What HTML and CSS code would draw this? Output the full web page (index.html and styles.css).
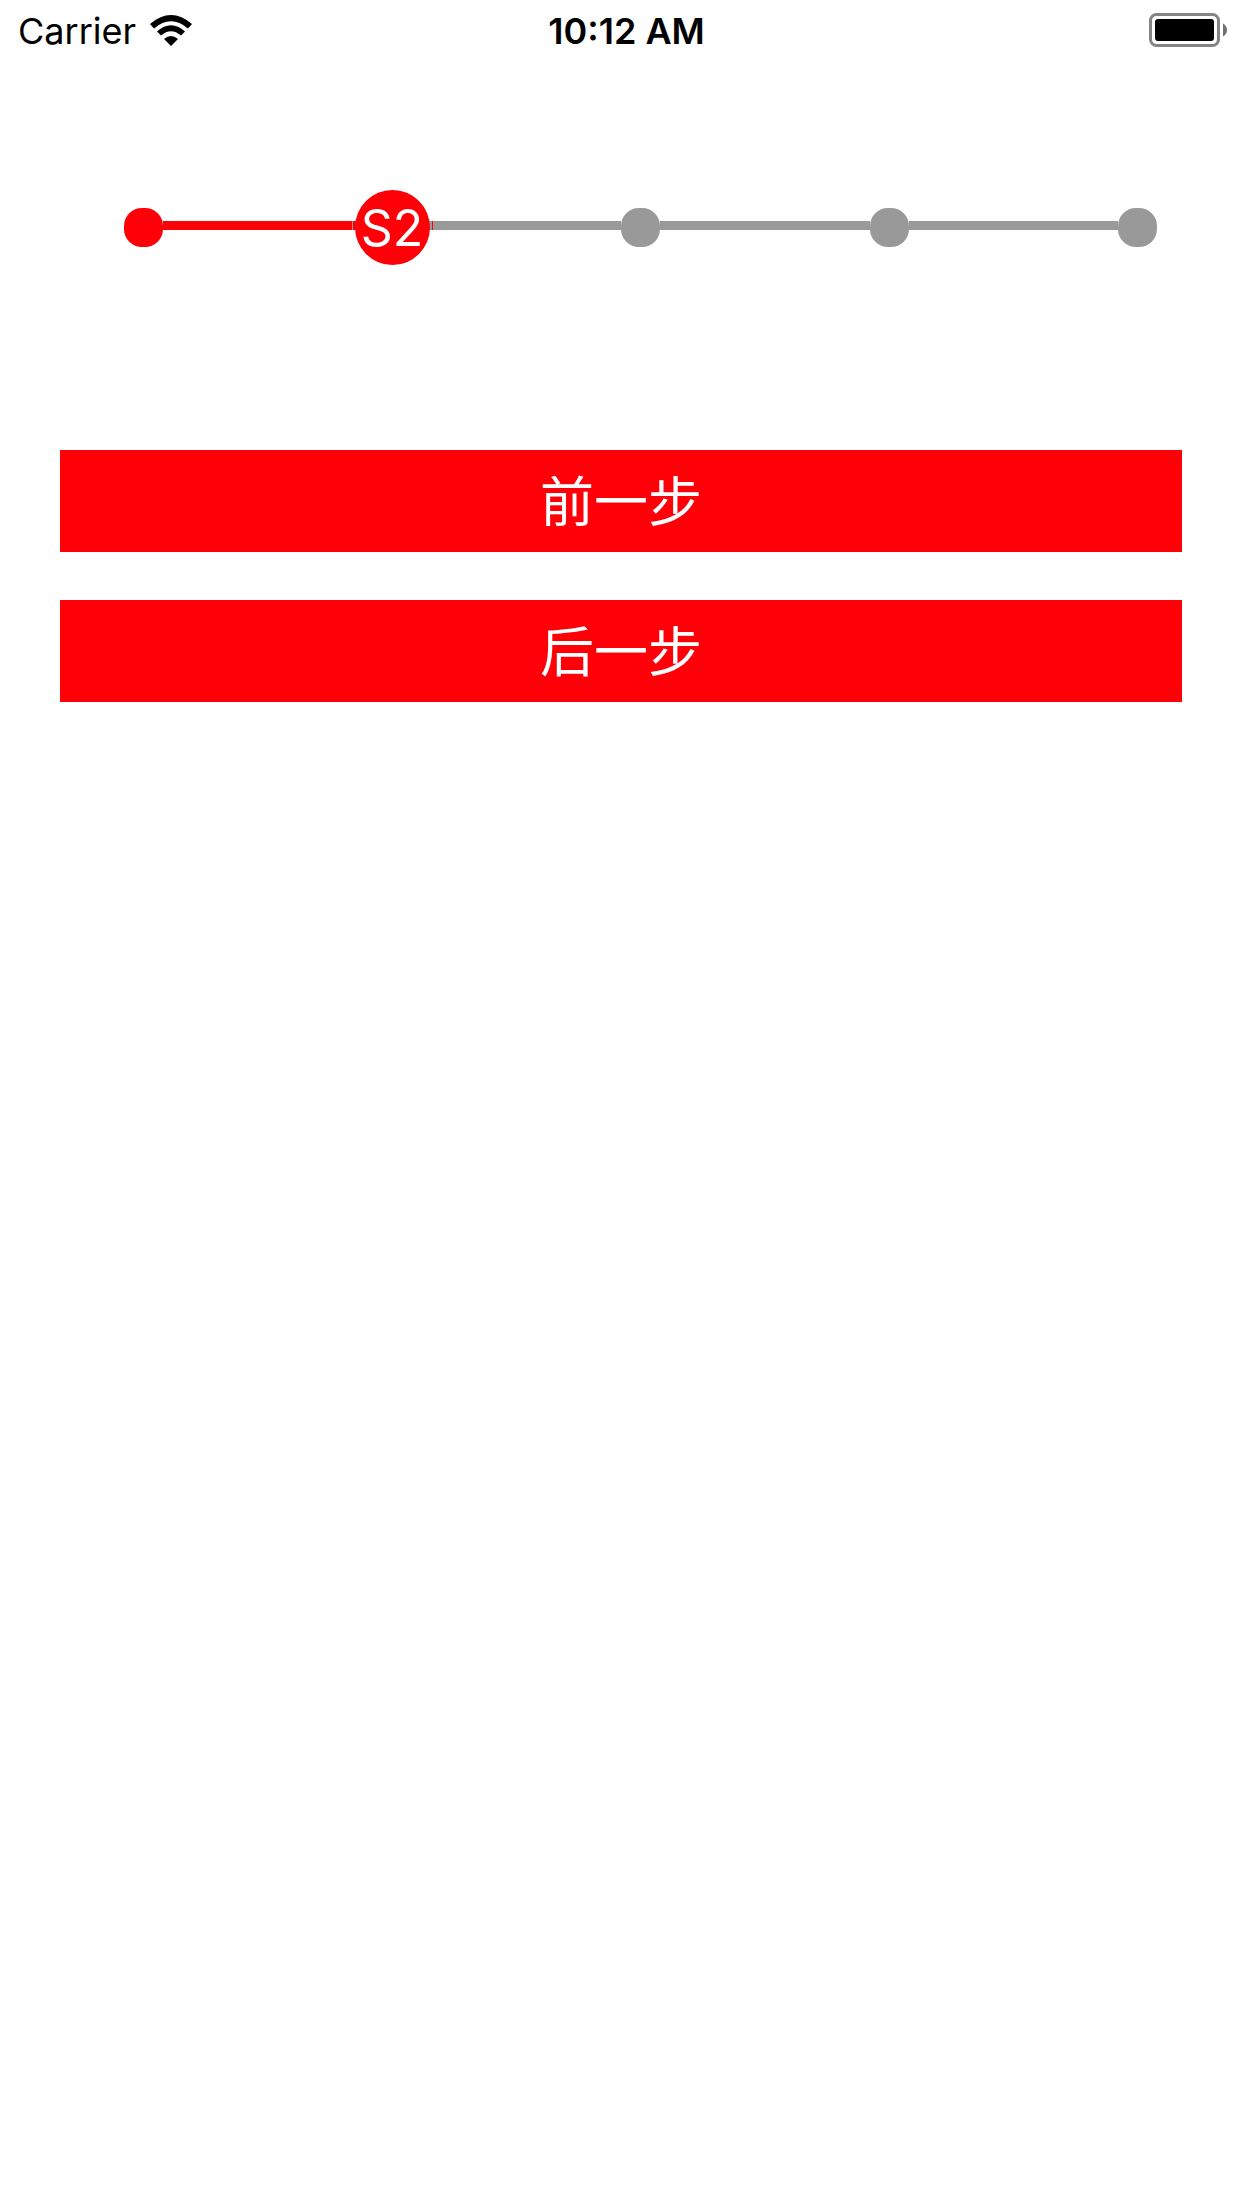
FILE: index.html
```html
<!DOCTYPE html>
<html lang="zh-CN">
<head>
<meta charset="utf-8">
<meta name="viewport" content="width=device-width, initial-scale=1">
<title>Steps</title>
<link rel="stylesheet" href="styles.css">
</head>
<body>
<header class="status">
  <div class="network">
    <span>Carrier</span>
    <svg class="wifi" viewBox="0 0 42 31" aria-hidden="true">
      <path d="M0 9Q21 -9 42 9L38 13.500Q21 -1 4 13.500Z"/>
      <path d="M7 16.500Q21 4 35 16.500L31 20.500Q21 12 11 20.500Z"/>
      <path d="M14 24Q21 18 28 24L21 31Z"/>
    </svg>
  </div>
  <time class="clock">10:12 AM</time>
  <svg class="battery" viewBox="0 0 78 34" aria-hidden="true">
    <rect x="1.500" y="1.500" width="68" height="31" rx="6" fill="none" stroke="#858585" stroke-width="3"/>
    <rect x="6" y="6" width="59" height="22" rx="3"/>
    <path d="M74 10.500Q78 13 78 17T74 23.500Z" fill="#707070"/>
  </svg>
</header>
<main>
  <ol class="steps">
    <li class="dot done"></li>
    <li class="line line-done" aria-hidden="true"></li>
    <li class="current" aria-current="step">S2</li>
    <li class="line line-next" aria-hidden="true"></li>
    <li class="dot"></li>
    <li class="line" aria-hidden="true"></li>
    <li class="dot"></li>
    <li class="line" aria-hidden="true"></li>
    <li class="dot"></li>
  </ol>
  <div class="actions">
    <button class="button" type="button">前一步</button>
    <button class="button" type="button">后一步</button>
  </div>
</main>
</body>
</html>
```
FILE: styles.css
```css
:root {
  --red: #ff0008;
  --grey: #999;
}

* {
  box-sizing: border-box;
}

body {
  margin: 0;
  background: #fff;
  color: #000;
  font-family: Inter, "Noto Sans CJK SC", sans-serif;
}

.status {
  display: grid;
  grid-template-columns: 1fr auto 1fr;
  align-items: center;
  height: 60px;
  padding: 0 15px 0 18px;
  font-size: 36px;
  line-height: 62px;
}

.network {
  display: flex;
  align-items: center;
  gap: 14px;
}

.wifi {
  width: 42px;
  height: 31px;
  margin-bottom: 2px;
}

.clock {
  padding-left: 8px;
  font-weight: 600;
}

.battery {
  width: 78px;
  height: 34px;
  margin-bottom: 2px;
  justify-self: end;
}

.steps {
  display: flex;
  align-items: center;
  height: 75px;
  margin: 130px 85px 0 124px;
  padding: 0;
  list-style: none;
}

.dot {
  flex: none;
  width: 39px;
  height: 39px;
  border-radius: 18px;
  background: var(--grey);
}

.done {
  background: var(--red);
}

.line {
  flex: 1;
  height: 9px;
  margin-bottom: 4px;
  background: var(--grey);
}

.line-done {
  background: linear-gradient(to left, var(--red) 20px, var(--grey) 20px, var(--grey) 21px, var(--red) 21px);
}

.line-next {
  background: linear-gradient(to right, var(--grey) 20px, var(--red) 20px, var(--red) 21px, var(--grey) 21px);
}

/* The current step overlaps the lines so that all steps stay evenly spaced. */
.current {
  z-index: 1;
  flex: none;
  width: 75px;
  height: 75px;
  margin: 0 -18px;
  border-radius: 50%;
  background: var(--red);
  color: #fff;
  font-size: 50px;
  font-weight: 400;
  line-height: 76px;
  text-align: center;
}

.actions {
  display: grid;
  gap: 48px;
  padding: 185px 60px 0;
}

.button {
  height: 102px;
  padding: 0 0 4px;
  border: 0;
  border-radius: 0;
  background: var(--red);
  color: #fff;
  font: 400 54px/98px "Noto Sans CJK SC", sans-serif;
}
```
